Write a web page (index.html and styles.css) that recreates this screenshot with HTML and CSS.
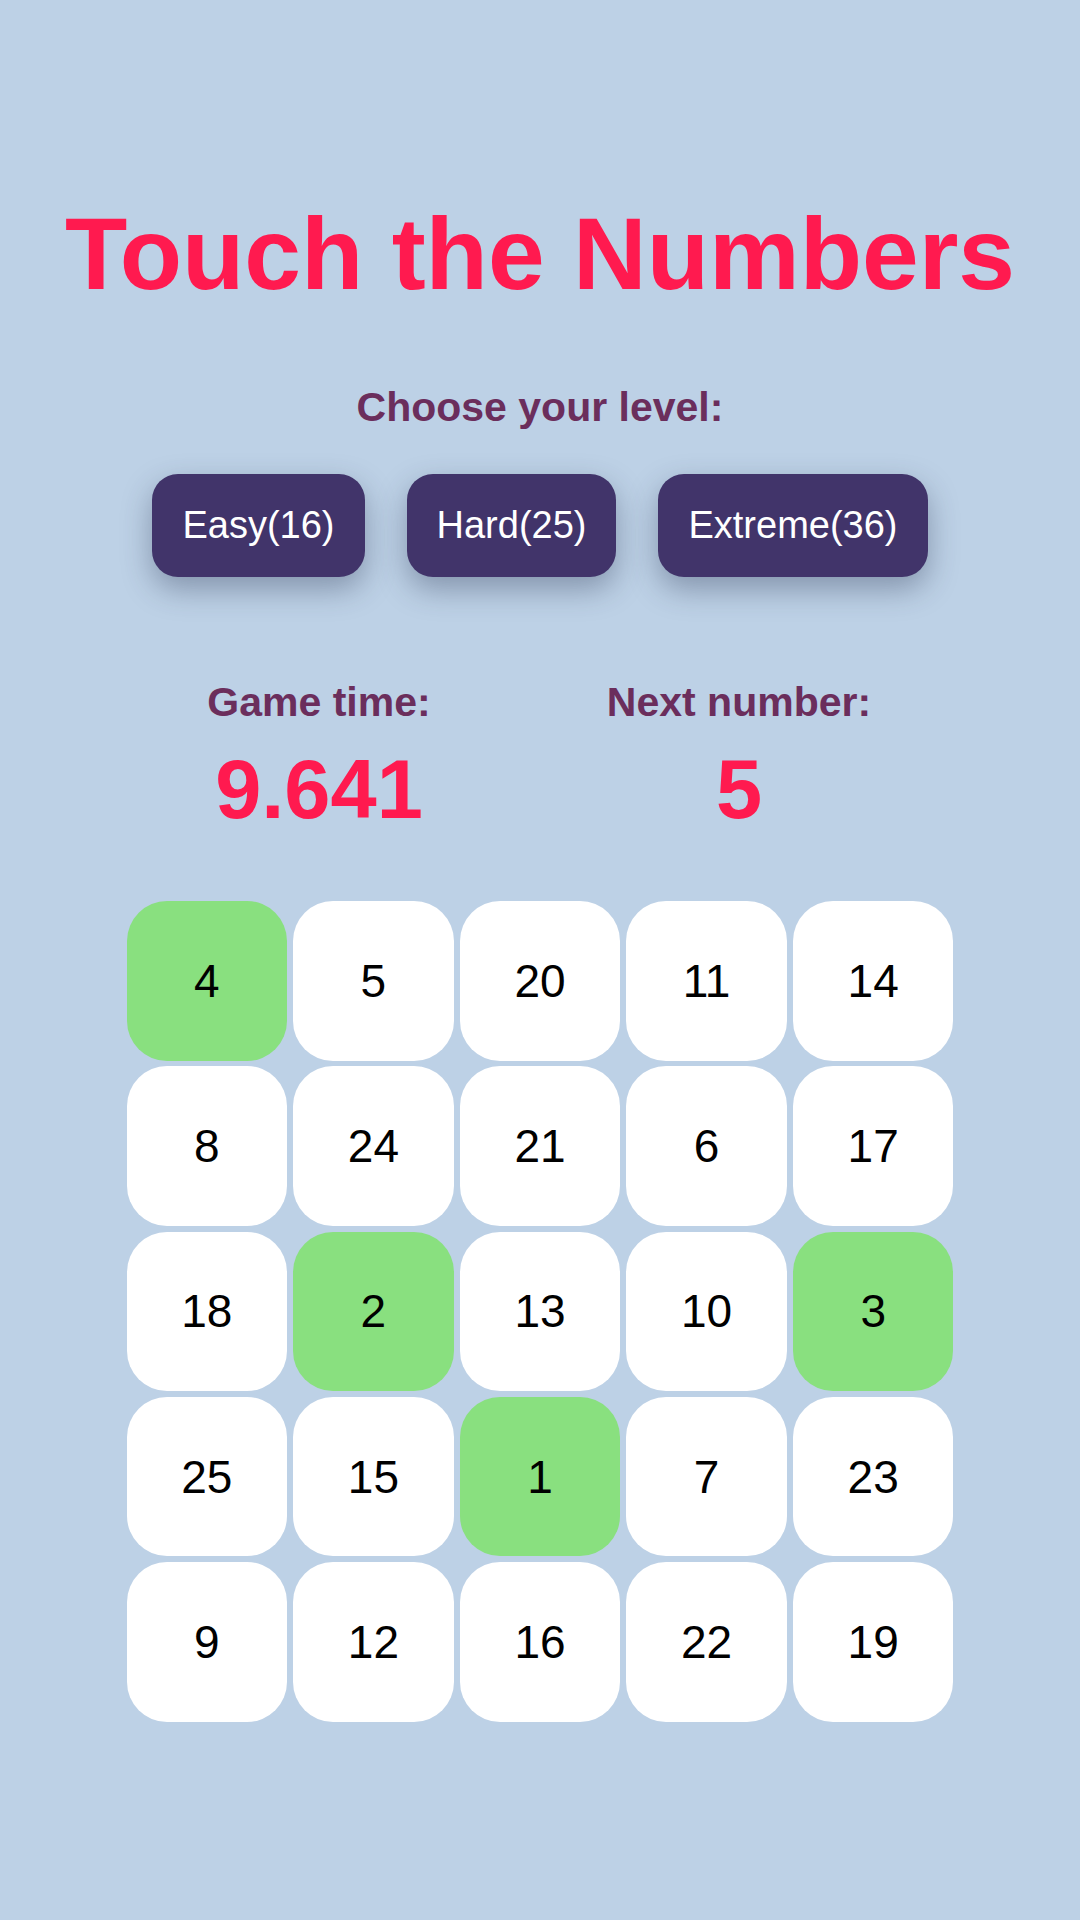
FILE: index.html
```html
<!DOCTYPE html>
<html lang="en">
<head>
<meta charset="utf-8">
<title>Touch the Numbers</title>
<link rel="stylesheet" href="styles.css">
</head>
<body>
<main class="app">
  <h1 class="title">Touch the Numbers</h1>
  <p class="level-label">Choose your level:</p>
  <div class="levels">
    <button class="level-btn">Easy(16)</button>
    <button class="level-btn">Hard(25)</button>
    <button class="level-btn">Extreme(36)</button>
  </div>
  <div class="stats">
    <div class="stat">
      <div class="stat-label">Game time:</div>
      <div class="stat-value">9.641</div>
    </div>
    <div class="stat">
      <div class="stat-label">Next number:</div>
      <div class="stat-value">5</div>
    </div>
  </div>
  <div class="board">
    <div class="cell done">4</div>
    <div class="cell">5</div>
    <div class="cell">20</div>
    <div class="cell">11</div>
    <div class="cell">14</div>
    <div class="cell">8</div>
    <div class="cell">24</div>
    <div class="cell">21</div>
    <div class="cell">6</div>
    <div class="cell">17</div>
    <div class="cell">18</div>
    <div class="cell done">2</div>
    <div class="cell">13</div>
    <div class="cell">10</div>
    <div class="cell done">3</div>
    <div class="cell">25</div>
    <div class="cell">15</div>
    <div class="cell done">1</div>
    <div class="cell">7</div>
    <div class="cell">23</div>
    <div class="cell">9</div>
    <div class="cell">12</div>
    <div class="cell">16</div>
    <div class="cell">22</div>
    <div class="cell">19</div>
  </div>
</main>
</body>
</html>
```

FILE: styles.css
```css
html, body {
  margin: 0;
  padding: 0;
  background: #bdd1e6;
}

body {
  font-family: "Liberation Sans", Arial, sans-serif;
  min-height: 1920px;
}

.app {
  display: flex;
  flex-direction: column;
  align-items: center;
  padding-top: 196px;
}

.title {
  margin: 0;
  font-size: 102px;
  font-weight: 700;
  line-height: normal;
  color: #ff1a4f;
}

.level-label {
  margin: 71px 0 0;
  font-size: 41px;
  font-weight: 700;
  line-height: normal;
  color: #6b2e5c;
}

.levels {
  display: flex;
  gap: 42px;
  margin-top: 43px;
}

.level-btn {
  font-family: "Liberation Sans", Arial, sans-serif;
  font-size: 38px;
  line-height: normal;
  color: #ffffff;
  background: #41346a;
  border: none;
  border-radius: 26px;
  padding: 30px;
  box-shadow: 0 12px 30px rgba(40, 50, 80, 0.38);
}

.stats {
  display: flex;
  justify-content: center;
  margin-top: 102px;
  padding-right: 22px;
}

.stat {
  width: 420px;
  display: flex;
  flex-direction: column;
  align-items: center;
}

.stat-label {
  font-size: 41px;
  font-weight: 700;
  line-height: normal;
  color: #6b2e5c;
}

.stat-value {
  margin-top: 16px;
  font-size: 83px;
  font-weight: 700;
  line-height: normal;
  color: #ff1a4f;
}

.board {
  display: grid;
  grid-template-columns: repeat(5, 160.6px);
  grid-auto-rows: 159.5px;
  column-gap: 6px;
  row-gap: 5.75px;
  margin-top: 63px;
}

.cell {
  display: flex;
  align-items: center;
  justify-content: center;
  background: #ffffff;
  border-radius: 40px;
  font-size: 46px;
  color: #000000;
}

.cell.done {
  background: #89e07f;
}
```
